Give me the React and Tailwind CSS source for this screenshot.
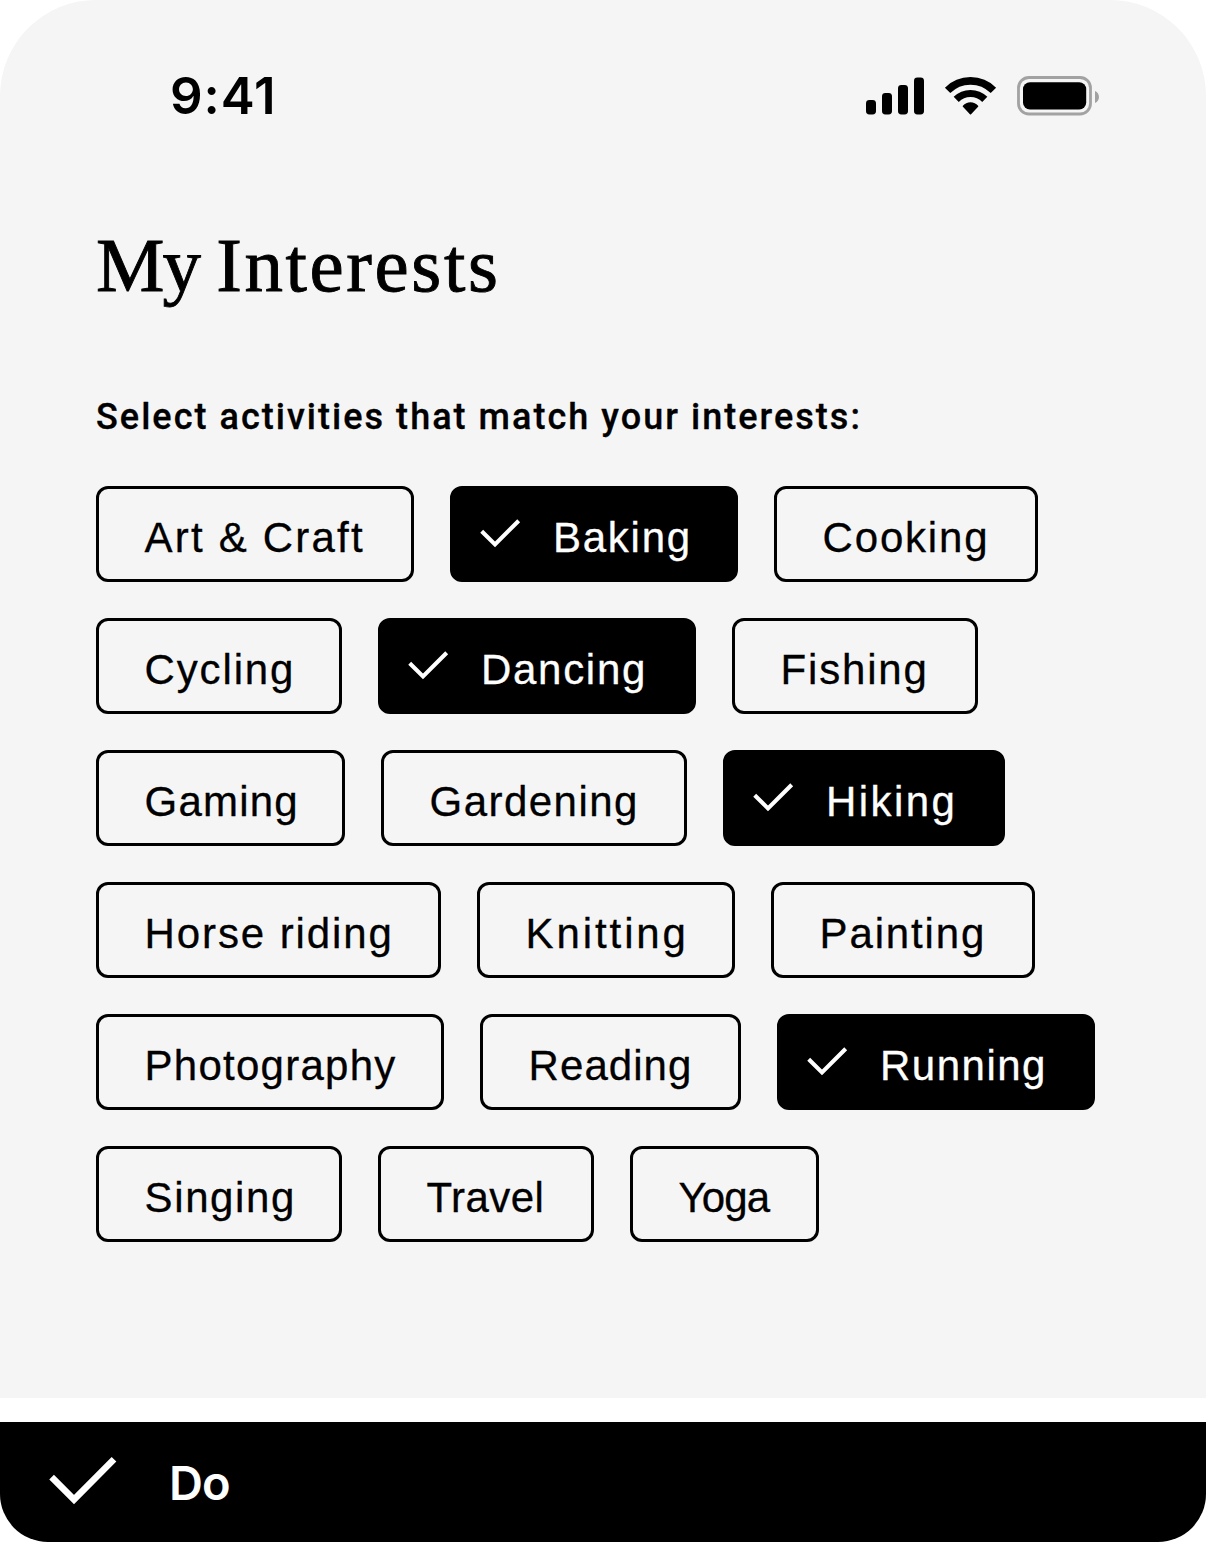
const rows = [
  [
    { label: "Art & Craft", box: "w-[318px] tracking-[2.2px]" },
    { label: "Baking", on: true, box: "w-[288px] tracking-[1.75px]" },
    { label: "Cooking", box: "w-[264px] tracking-[1.8px]" },
  ],
  [
    { label: "Cycling", box: "w-[246px] tracking-[1.85px]" },
    { label: "Dancing", on: true, box: "w-[318px] tracking-[1.7px]" },
    { label: "Fishing", box: "w-[246px] tracking-[1.8px]" },
  ],
  [
    { label: "Gaming", box: "w-[249px] tracking-[1.2px]" },
    { label: "Gardening", box: "w-[306px] tracking-[1.45px]" },
    { label: "Hiking", on: true, box: "w-[282px] tracking-[2.45px]" },
  ],
  [
    { label: "Horse riding", box: "w-[345px] tracking-[1.9px]" },
    { label: "Knitting", box: "w-[258px] tracking-[2.9px]" },
    { label: "Painting", box: "w-[264px] tracking-[1.85px]" },
  ],
  [
    { label: "Photography", box: "w-[348px] tracking-[1.25px]" },
    { label: "Reading", box: "w-[261px] tracking-[1.05px]" },
    { label: "Running", on: true, box: "w-[318px] tracking-[1.5px]" },
  ],
  [
    { label: "Singing", box: "w-[246px] tracking-[1.6px]" },
    { label: "Travel", box: "w-[216px] tracking-[0.4px]" },
    { label: "Yoga", box: "w-[189px] tracking-[-0.9px]" },
  ],
];

function Chip({ label, on, box }) {
  const tone = on ? "bg-black pl-[21px] text-white" : "pl-[45.6px] text-black";
  return (
    <button
      type="button"
      aria-pressed={!!on}
      className={`flex h-24 shrink-0 items-center rounded-xl border-[3px] border-black text-[42px] leading-none whitespace-nowrap ${tone} ${box}`}
    >
      {on && (
        <svg viewBox="0 0 48 48" className="mr-[31px] size-12 shrink-0" fill="none" stroke="currentColor" strokeWidth="4.1">
          <path d="M7.7 21.2 21 34.4 44.7 10.7" />
        </svg>
      )}
      <span className="pt-[7px] [-webkit-text-stroke:0.3px_currentColor]">{label}</span>
    </button>
  );
}

function StatusIcons() {
  return (
    <svg viewBox="866 72 234 48" className="h-12 w-[234px]">
      <rect x="866" y="100" width="10" height="14.5" rx="3.4" />
      <rect x="882" y="93" width="10" height="21.5" rx="3.4" />
      <rect x="898" y="85" width="10" height="29.5" rx="3.4" />
      <rect x="914" y="77.5" width="10" height="37" rx="3.4" />
      <g fill="none" stroke="black">
        <path d="M947.6 90.4A32.3 32.3 0 0 1 993.4 90.4" strokeWidth="7.6" />
        <path d="M956.2 99.4A20.3 20.3 0 0 1 984.8 99.4" strokeWidth="7.2" />
      </g>
      <path d="M963.5 106.2C967.2 101.9 973.8 101.9 977.5 106.2L970.5 113.6Z" stroke="black" strokeWidth="1.6" strokeLinejoin="round" />
      <rect x="1018.5" y="77.5" width="72" height="36.5" rx="10.5" fill="none" stroke="#a2a2a2" strokeWidth="2.8" />
      <rect x="1023" y="82.3" width="63.2" height="27.2" rx="7" />
      <path d="M1095 91C1100.3 93.2 1100.3 100.8 1095 103Z" fill="#a2a2a2" />
    </svg>
  );
}

export default function App() {
  return (
    <div className="flex h-[1542px] w-[1206px] flex-col gap-6 bg-white font-['Liberation_Sans',sans-serif] text-black">
      <main className="h-[1398px] rounded-t-[96px] bg-[#f5f5f5] px-24">
        <header className="flex h-48 items-center justify-between pr-[10px] pl-[74px]">
          <span className="pb-[2px] font-['Inter',sans-serif] text-[51px] leading-none font-semibold tracking-[0.9px]">9:41</span>
          <StatusIcons />
        </header>
        <h1 className="mt-[23px] font-['Liberation_Serif',serif] text-[77px] leading-[100px] tracking-[2.6px] [-webkit-text-stroke:0.9px_currentColor]">
          <span className="tracking-[-2px]">My </span>Interests
        </h1>
        <p className="mt-[78px] font-['Roboto',sans-serif] text-[36px] leading-[48px] font-medium tracking-[2.03px] whitespace-nowrap [-webkit-text-stroke:0.3px_currentColor]">
          Select activities that match your interests:
        </p>
        <div className="mt-[45px] flex flex-col gap-9">
          {rows.map((row) => (
            <div key={row[0].label} className="flex gap-9">
              {row.map((chip) => (
                <Chip key={chip.label} {...chip} />
              ))}
            </div>
          ))}
        </div>
      </main>
      <footer className="flex h-[120px] items-center rounded-b-[48px] bg-black pl-12 text-white">
        <svg viewBox="48 1446 72 72" className="size-[72px]" fill="none" stroke="currentColor" strokeWidth="6.6">
          <path d="M51.6 1477.2 74 1499.6 114 1459.3" />
        </svg>
        <span className="ml-[49px] font-['Inter',sans-serif] text-[47px] leading-none font-semibold tracking-[-0.9px]">Do</span>
      </footer>
    </div>
  );
}
